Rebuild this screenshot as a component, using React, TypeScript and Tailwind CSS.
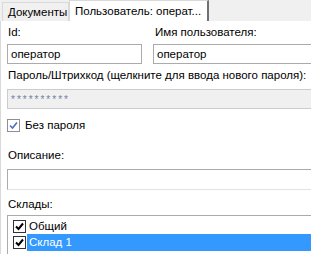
import React from "react";

const font = { fontFamily: '"Liberation Sans", Arial, sans-serif' };

function Check() {
  return (
    <svg width="9" height="9" viewBox="0 0 9 9" className="block">
      <path d="M1 4.5 L3.5 7 L8 1.5" stroke="#000" strokeWidth="2" fill="none" />
    </svg>
  );
}

export default function App() {
  return (
    <div className="w-[311px] h-[254px] bg-[#f0f0f0] overflow-hidden text-[11.5px] leading-[15px] text-black" style={font}>
      <div className="h-[21px] flex items-end">
        <div className="ml-[2px] h-[19px] w-[67px] pl-[5px] flex items-center border border-b-0 border-[#d9d9d9] bg-[#f0f0f0] whitespace-nowrap">Документы</div>
        <div className="h-[21px] w-[140px] pl-[5px] flex items-center bg-white border-t border-l border-[#d9d9d9] border-r-2 border-r-[#707070] whitespace-nowrap">
          Пользователь: операт...
        </div>
      </div>
      <div className="bg-white h-[233px] border-l border-[#d9d9d9] pl-[6px] pt-[4px]">
        <div className="flex gap-[11px]">
          <div className="w-[135px] flex flex-col">
            <div className="h-[15px] pl-[1px]">Id:</div>
            <div className="mt-[4px] h-[20px] border border-[#ababab] px-[3px] flex items-center">оператор</div>
          </div>
          <div className="flex-1 flex flex-col">
            <div className="h-[15px] pl-[2px]">Имя пользователя:</div>
            <div className="mt-[4px] h-[20px] border border-[#ababab] border-r-0 px-[3px] flex items-center">оператор</div>
          </div>
        </div>
        <div className="mt-[4px] h-[15px] pl-[1px] whitespace-nowrap">Пароль/Штрихкод (щелкните для ввода нового пароля):</div>
        <div className="mt-[6px] h-[20px] border border-[#cccccc] border-r-0 bg-[#f0f0f0] px-[3px] flex items-center text-[#7080a0] text-[10px] tracking-[2px]">**********</div>
        <div className="mt-[10px] h-[13px] flex items-center gap-[5px]">
          <div className="w-[13px] h-[13px] border border-[#8f8f8f] bg-white flex items-center justify-center">
            <svg width="9" height="9" viewBox="0 0 9 9"><path d="M1 4.5 L3.5 7 L8 1.5" stroke="#4a6fc7" strokeWidth="1.6" fill="none" /></svg>
          </div>
          <span>Без пароля</span>
        </div>
        <div className="mt-[16px] h-[15px] pl-[1px]">Описание:</div>
        <div className="mt-[6px] h-[21px] border border-[#ababab] border-b-[#e3e3e3] border-r-0"></div>
        <div className="mt-[7px] h-[15px] pl-[1px]">Склады:</div>
        <div className="mt-[3px] h-[40px] border-t border-l border-[#ababab] pt-[2px]">
          <div className="h-[16px] flex items-center">
            <div className="ml-[5px] w-[13px] h-[13px] border border-[#333] bg-white flex items-center justify-center"><Check /></div>
            <span className="ml-[1px] px-[2px]">Общий</span>
          </div>
          <div className="h-[17px] flex items-center">
            <div className="ml-[5px] w-[13px] h-[13px] border border-[#333] bg-white flex items-center justify-center"><Check /></div>
            <span className="ml-[1px] flex-1 h-full px-[2px] bg-[#3399ff] text-white flex items-center">Склад 1</span>
          </div>
        </div>
      </div>
    </div>
  );
}
